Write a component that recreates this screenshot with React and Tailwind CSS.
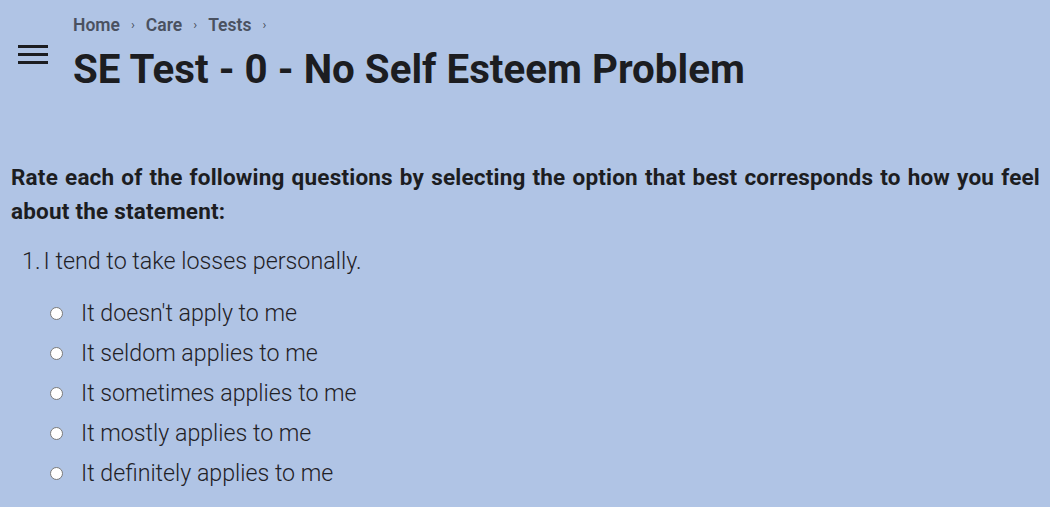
export default function App() {
  const options = [
    "It doesn't apply to me",
    "It seldom applies to me",
    "It sometimes applies to me",
    "It mostly applies to me",
    "It definitely applies to me",
  ];
  return (
    <div className="w-[1050px] h-[507px] overflow-hidden bg-[#b0c4e5] text-[#1c1d21]" style={{ fontFamily: "Roboto, 'Noto Sans', sans-serif" }}>
      <div className="flex items-start pt-[14px]">
        <div className="w-[73px] pl-[18px] pt-[31px] shrink-0">
          <div className="flex flex-col gap-[5px] w-[30px]">
            <div className="h-[3px] bg-[#1c1d21]"></div>
            <div className="h-[3px] bg-[#1c1d21]"></div>
            <div className="h-[3px] bg-[#1c1d21]"></div>
          </div>
        </div>
        <div className="flex flex-col">
          <div className="flex items-center text-[17.5px] font-semibold text-[#4a5160] leading-[22px]">
            <span>Home</span>
            <span className="mx-[11px] text-[13px] font-normal">›</span>
            <span>Care</span>
            <span className="mx-[11px] text-[13px] font-normal">›</span>
            <span>Tests</span>
            <span className="mx-[11px] text-[13px] font-normal">›</span>
          </div>
          <h1 className="text-[40.3px] font-bold leading-[48px] mt-[10px]">SE Test - 0 - No Self Esteem Problem</h1>
        </div>
      </div>
      <div className="pl-[11px] pr-[10px] mt-[67px]">
        <p className="text-[22.5px] font-bold leading-[33.5px] tracking-[0.2px] text-justify">
          Rate each of the following questions by selecting the option that best corresponds to how you feel about the statement:
        </p>
        <ol className="mt-[18.5px]">
          <li className="flex text-[23.3px] font-light text-[#1f2126] leading-[28px] pl-[11px]">
            <span>1.</span>
            <span className="ml-[3px]">I tend to take losses personally.</span>
          </li>
        </ol>
        <div className="mt-[24.5px] pl-[39px] flex flex-col gap-[12px]">
          {options.map((o) => (
            <label key={o} className="flex items-center h-[28px]">
              <span className="w-[13px] h-[13px] rounded-full bg-white border border-[#7a7a7a] shrink-0"></span>
              <span className="ml-[18px] text-[23.2px] font-light text-[#1f2126]">{o}</span>
            </label>
          ))}
        </div>
      </div>
    </div>
  );
}
